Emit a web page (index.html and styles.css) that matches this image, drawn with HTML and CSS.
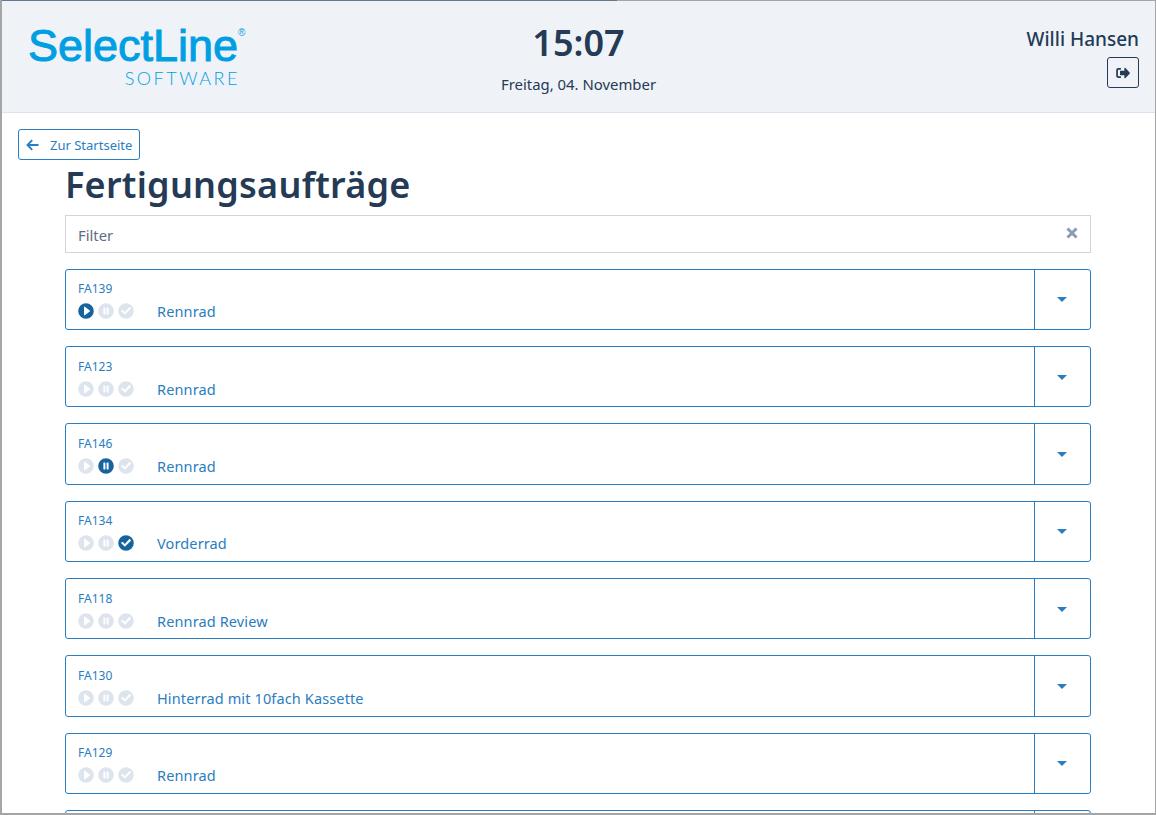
FILE: index.html
```html
<!DOCTYPE html>
<html lang="de">
  <head>
    <meta charset="UTF-8" />
    <meta name="viewport" content="width=device-width, initial-scale=1.0" />
    <title>Fertigungsaufträge</title>
    <link rel="stylesheet" href="styles.css">
  </head>
  <body>
    <svg class="icon-defs" width="0" height="0">
      <symbol id="i-play" viewBox="0 0 16 16">
        <path fill-rule="evenodd" d="M8 .2a7.8 7.8 0 1 1 0 15.6A7.8 7.8 0 0 1 8 .2zM6 4.2v7.6c0 .5.4.7.8.5l5-3.8c.3-.3.3-.7 0-1l-5-3.8c-.4-.2-.8 0-.8.5z" />
      </symbol>
      <symbol id="i-pause" viewBox="0 0 16 16">
        <path fill-rule="evenodd" d="M8 .2a7.8 7.8 0 1 1 0 15.6A7.8 7.8 0 0 1 8 .2zM5.400 5v6c0 .3.2.5.5.5h1c.3 0 .5-.2.5-.5V5c0-.3-.2-.5-.5-.5h-1c-.3 0-.5.2-.5.5zm3.200 0v6c0 .3.2.5.5.5h1c.3 0 .5-.2.5-.5V5c0-.3-.2-.5-.5-.5h-1c-.3 0-.5.2-.5.5z" />
      </symbol>
      <symbol id="i-check" viewBox="0 0 16 16">
        <path fill-rule="evenodd" d="M8 .2a7.8 7.8 0 1 1 0 15.6A7.8 7.8 0 0 1 8 .2zM3.300 8.300l3 3c.3.3.7.3 1 0l5.400-5.400c.3-.3.3-.7 0-1l-.6-.6c-.3-.3-.7-.3-1 0L6.800 9 4.900 7.100c-.3-.3-.7-.3-1 0l-.6.6c-.3.3-.3.4 0 .6z" />
      </symbol>
    </svg>

    <div class="app">
      <header class="topbar">
        <div class="logo">
          <div class="logo-name">SelectLine<span class="logo-reg">®</span></div>
          <div class="logo-sub">SOFTWARE</div>
        </div>
        <div class="clock">
          <div class="clock-time">15:07</div>
          <div class="clock-date">Freitag, 04. November</div>
        </div>
        <div class="user">
          <div class="user-name">Willi Hansen</div>
          <button class="logout" aria-label="Abmelden">
            <svg width="14" height="12" viewBox="0 0 14 12">
              <path fill="#243a55" d="M8.400 1.200v2.600H4.600c-.4 0-.6.2-.6.6v3.200c0 .4.2.6.6.6h3.800v2.600c0 .5.5.7.9.4l4.500-4.600c.2-.3.2-.6 0-.8L9.300.8c-.4-.3-.9-.1-.9.4z" />
              <path fill="#243a55" d="M4.600 1H2.400C1.100 1 .2 1.900.2 3.200v5.600c0 1.300.9 2.200 2.200 2.200h2.200c.2 0 .3-.1.3-.3V9.500c0-.2-.1-.3-.3-.3H2.400c-.3 0-.5-.2-.5-.5V3.300c0-.3.2-.5.5-.5h2.200c.2 0 .3-.1.3-.3V1.300c0-.2-.1-.3-.3-.3z" />
            </svg>
          </button>
        </div>
      </header>

      <main class="content">
        <a class="back" href="#">
          <svg width="13" height="12" viewBox="0 0 13 12">
            <path fill="none" stroke="#2a7dc0" stroke-width="1.900" d="M6.200 1.200L1.500 6l4.700 4.800M1.800 6h10.700" />
          </svg>
          <span>Zur Startseite</span>
        </a>

        <div class="orders">
          <h1>Fertigungsaufträge</h1>

          <div class="filter">
            <span class="filter-text">Filter</span>
            <svg class="filter-clear" width="12" height="12" viewBox="0 0 12 12">
              <path fill="none" stroke="#8c9db1" stroke-width="3" d="M1.500 1.500l9 9M10.500 1.500l-9 9" />
            </svg>
          </div>

          <!-- one row per order; state marks which of the three icons is lit -->
          <div class="order">
            <div class="order-main">
              <div class="order-no">FA139</div>
              <div class="order-line">
                <div class="states">
                  <svg class="state on"><use href="#i-play" /></svg>
                  <svg class="state"><use href="#i-pause" /></svg>
                  <svg class="state"><use href="#i-check" /></svg>
                </div>
                <span class="order-name">Rennrad</span>
              </div>
            </div>
            <div class="order-toggle"><i class="caret"></i></div>
          </div>

          <div class="order">
            <div class="order-main">
              <div class="order-no">FA123</div>
              <div class="order-line">
                <div class="states">
                  <svg class="state"><use href="#i-play" /></svg>
                  <svg class="state"><use href="#i-pause" /></svg>
                  <svg class="state"><use href="#i-check" /></svg>
                </div>
                <span class="order-name">Rennrad</span>
              </div>
            </div>
            <div class="order-toggle"><i class="caret"></i></div>
          </div>

          <div class="order">
            <div class="order-main">
              <div class="order-no">FA146</div>
              <div class="order-line">
                <div class="states">
                  <svg class="state"><use href="#i-play" /></svg>
                  <svg class="state on"><use href="#i-pause" /></svg>
                  <svg class="state"><use href="#i-check" /></svg>
                </div>
                <span class="order-name">Rennrad</span>
              </div>
            </div>
            <div class="order-toggle"><i class="caret"></i></div>
          </div>

          <div class="order">
            <div class="order-main">
              <div class="order-no">FA134</div>
              <div class="order-line">
                <div class="states">
                  <svg class="state"><use href="#i-play" /></svg>
                  <svg class="state"><use href="#i-pause" /></svg>
                  <svg class="state on"><use href="#i-check" /></svg>
                </div>
                <span class="order-name">Vorderrad</span>
              </div>
            </div>
            <div class="order-toggle"><i class="caret"></i></div>
          </div>

          <div class="order">
            <div class="order-main">
              <div class="order-no">FA118</div>
              <div class="order-line">
                <div class="states">
                  <svg class="state"><use href="#i-play" /></svg>
                  <svg class="state"><use href="#i-pause" /></svg>
                  <svg class="state"><use href="#i-check" /></svg>
                </div>
                <span class="order-name">Rennrad Review</span>
              </div>
            </div>
            <div class="order-toggle"><i class="caret"></i></div>
          </div>

          <div class="order">
            <div class="order-main">
              <div class="order-no">FA130</div>
              <div class="order-line">
                <div class="states">
                  <svg class="state"><use href="#i-play" /></svg>
                  <svg class="state"><use href="#i-pause" /></svg>
                  <svg class="state"><use href="#i-check" /></svg>
                </div>
                <span class="order-name">Hinterrad mit 10fach Kassette</span>
              </div>
            </div>
            <div class="order-toggle"><i class="caret"></i></div>
          </div>

          <div class="order">
            <div class="order-main">
              <div class="order-no">FA129</div>
              <div class="order-line">
                <div class="states">
                  <svg class="state"><use href="#i-play" /></svg>
                  <svg class="state"><use href="#i-pause" /></svg>
                  <svg class="state"><use href="#i-check" /></svg>
                </div>
                <span class="order-name">Rennrad</span>
              </div>
            </div>
            <div class="order-toggle"><i class="caret"></i></div>
          </div>

          <div class="order">
            <div class="order-main"></div>
            <div class="order-toggle"></div>
          </div>
        </div>
      </main>
    </div>
  </body>
</html>
```

FILE: styles.css
```css
html,
body {
  height: 100%;
  margin: 0;
  overflow: hidden;
}

body {
  box-sizing: border-box;
  font-family: "Noto Sans", sans-serif;
  color: #243a55;
  background-color: #fff;
  border-left: 2px solid #a5a5a5;
  border-right: 1px solid #a5a5a5;
  border-bottom: 2px solid #a5a5a5;
}

.icon-defs {
  position: absolute;
}

.app {
  height: 100%;
  overflow: hidden;
}

.topbar {
  box-sizing: border-box;
  height: 113px;
  display: grid;
  grid-template-columns: 1fr auto 1fr;
  padding: 1px 16px 0;
  background: linear-gradient(to right, #64798f 615px, #a5a5a5 615px) 0 0 / 100% 1px no-repeat, #eff3f8;
  border-bottom: 1px solid #dde3ee;
}

.logo {
  width: 218px;
  margin-left: 10px;
  color: #009fe3;
}

.logo-name {
  position: relative;
  margin-top: 23px;
  font-family: "Liberation Sans", Arial, sans-serif;
  font-size: 45px;
  line-height: 44px;
  -webkit-text-stroke: 1px #009fe3;
}

.logo-reg {
  position: absolute;
  top: 2px;
  left: 210px;
  font-size: 10px;
  line-height: 14px;
  -webkit-text-stroke: 0;
}

.logo-sub {
  padding-right: 6px;
  font-family: Lato, sans-serif;
  font-size: 18px;
  font-weight: 300;
  line-height: 20px;
  letter-spacing: 2.500px;
  text-align: right;
}

.clock {
  text-align: center;
}

.clock-time {
  margin-top: 17px;
  font-size: 36px;
  font-weight: 600;
  line-height: 49px;
}

.clock-date {
  margin-top: 8px;
  font-size: 14.900px;
  line-height: 19px;
}

.user {
  display: flex;
  flex-direction: column;
  align-items: flex-end;
}

.user-name {
  margin-top: 26px;
  font-size: 19px;
  font-weight: 500;
  line-height: 25px;
}

.logout {
  width: 32px;
  height: 31px;
  margin-top: 5px;
  padding: 0;
  display: flex;
  align-items: center;
  justify-content: center;
  background: none;
  border: 1px solid #243a55;
  border-radius: 3px;
}

.content {
  padding: 16px 64px 0 16px;
}

.back {
  box-sizing: border-box;
  width: 122px;
  height: 31px;
  display: flex;
  align-items: center;
  gap: 11px;
  padding-left: 7px;
  color: #2a7dc0;
  font-size: 13px;
  text-decoration: none;
  border: 1px solid #2a7dc0;
  border-radius: 3px;
}

.orders {
  margin-left: 47px;
}

h1 {
  margin: 0;
  font-size: 36px;
  font-weight: 600;
  line-height: 49px;
  letter-spacing: 0.25px;
}

.filter {
  box-sizing: border-box;
  height: 38px;
  margin: 5.670px 0 16px;
  display: flex;
  align-items: center;
  justify-content: space-between;
  padding: 2px 12px 0;
  color: #5d6d7e;
  font-size: 14.800px;
  border: 1px solid #d0d4de;
}

.filter-clear {
  margin-top: -3px;
}

.order {
  box-sizing: border-box;
  height: 61.330px;
  margin-bottom: 16px;
  display: flex;
  color: #2a7dc0;
  border: 1px solid #2a7dc0;
  border-radius: 3px;
}

.order-main {
  flex: 1;
  padding: 10.600px 12px 0;
}

.order-no {
  font-size: 12px;
  line-height: 17px;
}

.order-line {
  display: flex;
  align-items: center;
  height: 20px;
  margin-top: 4px;
}

.states {
  width: 79px;
  display: flex;
  gap: 4px;
}

.state {
  width: 16px;
  height: 16px;
  fill: #dde4ee;
}

.state.on {
  fill: #16649f;
}

.order-name {
  font-size: 14.500px;
  letter-spacing: 0.130px;
}

.order-toggle {
  width: 55px;
  display: flex;
  align-items: center;
  justify-content: center;
  border-left: 1px solid #2a7dc0;
}

.caret {
  width: 0;
  height: 0;
  margin: 1.300px 1px 0 0;
  border-top: 5px solid #2a7dc0;
  border-left: 5px solid transparent;
  border-right: 5px solid transparent;
}
```
